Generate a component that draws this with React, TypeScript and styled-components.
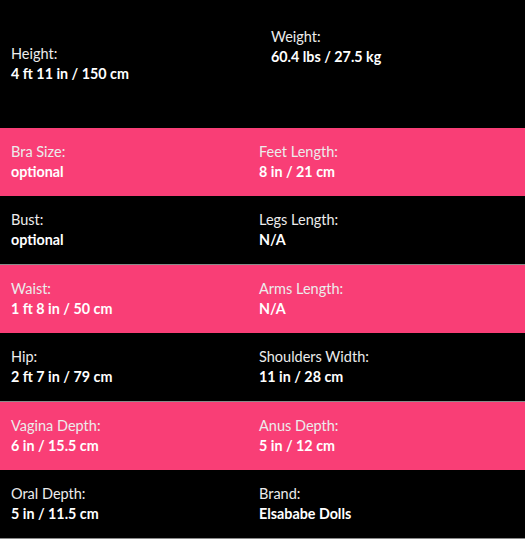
import styled, { createGlobalStyle } from "styled-components";

type Spec = { label: string; value: string };

const rows: Spec[][] = [
  [
    { label: "Height:", value: "4 ft 11 in / 150 cm" },
    { label: "Weight:", value: "60.4 lbs / 27.5 kg" },
  ],
  [
    { label: "Bra Size:", value: "optional" },
    { label: "Feet Length:", value: "8 in / 21 cm" },
  ],
  [
    { label: "Bust:", value: "optional" },
    { label: "Legs Length:", value: "N/A" },
  ],
  [
    { label: "Waist:", value: "1 ft 8 in / 50 cm" },
    { label: "Arms Length:", value: "N/A" },
  ],
  [
    { label: "Hip:", value: "2 ft 7 in / 79 cm" },
    { label: "Shoulders Width:", value: "11 in / 28 cm" },
  ],
  [
    { label: "Vagina Depth:", value: "6 in / 15.5 cm" },
    { label: "Anus Depth:", value: "5 in / 12 cm" },
  ],
  [
    { label: "Oral Depth:", value: "5 in / 11.5 cm" },
    { label: "Brand:", value: "Elsababe Dolls" },
  ],
];

const GlobalStyle = createGlobalStyle`
  body {
    margin: 0;
    background: #fff;
    font-family: Lato, "Open Sans", sans-serif;
  }
`;

const App = () => {
  return (
    <>
      <GlobalStyle />
      <Table>
        {rows.map((pair, i) => (
          <Row key={i} $pink={i % 2 === 1} $first={i === 0}>
            {pair.map((cell, j) => (
              <Cell key={j} $top={i === 0 && j === 1}>
                <Label>{cell.label}</Label>
                <Value>{cell.value}</Value>
              </Cell>
            ))}
          </Row>
        ))}
      </Table>
    </>
  );
};

const Table = styled.div`
  display: flex;
  flex-direction: column;
  width: 100%;
`;
const Row = styled.div<{ $pink: boolean; $first: boolean }>`
  display: grid;
  grid-template-columns: 248px 1fr;
  height: ${(p) => (p.$first ? "128px" : p.$pink ? "68px" : "69px")};
  background: ${(p) => (p.$pink ? "#f93e76" : "#000")};
  border-bottom: ${(p) => (p.$pink || p.$first ? "none" : "1px solid #8a8a8a")};
  box-sizing: border-box;
`;
const Cell = styled.div<{ $top: boolean }>`
  display: flex;
  flex-direction: column;
  justify-content: ${(p) => (p.$top ? "flex-start" : "center")};
  padding: ${(p) => (p.$top ? "27px 11px 0 23px" : "0 11px")};
`;
const Label = styled.div`
  color: #ececec;
  font-size: 14.5px;
  line-height: 20px;
`;
const Value = styled.div`
  color: #fff;
  font-size: 14.3px;
  font-weight: 700;
  line-height: 20px;
`;

export default App;
